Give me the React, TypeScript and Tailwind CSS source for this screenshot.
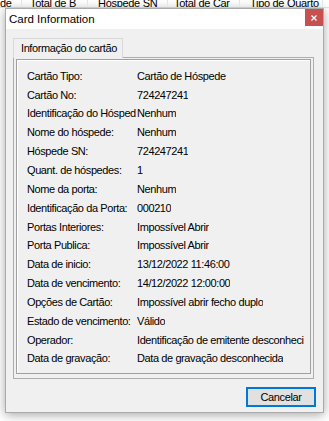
import React from 'react';

const rows: [string, string][] = [
  ['Cartão Tipo:', 'Cartão de Hóspede'],
  ['Cartão No:', '724247241'],
  ['Identificação do Hósped', 'Nenhum'],
  ['Nome do hóspede:', 'Nenhum'],
  ['Hóspede SN:', '724247241'],
  ['Quant. de hóspedes:', '1'],
  ['Nome da porta:', 'Nenhum'],
  ['Identificação da Porta:', '000210'],
  ['Portas Interiores:', 'Impossível Abrir'],
  ['Porta Publica:', 'Impossível Abrir'],
  ['Data de inicio:', '13/12/2022 11:46:00'],
  ['Data de vencimento:', '14/12/2022 12:00:00'],
  ['Opções de Cartão:', 'Impossível abrir fecho duplo'],
  ['Estado de vencimento:', 'Válido'],
  ['Operador:', 'Identificação de emitente desconheci'],
  ['Data de gravação:', 'Data de gravação desconhecida'],
];

// colunas da lista por trás do diálogo
const headerCols = [
  { w: 'w-[22px]', pl: 'pl-0', text: 'de' },
  { w: 'w-[66px]', pl: 'pl-[8px]', text: 'Total de B' },
  { w: 'w-[80px]', pl: 'pl-[10px]', text: 'Hóspede SN' },
  { w: 'w-[72px]', pl: 'pl-[6px]', text: 'Total de Car' },
  { w: 'w-[83px]', pl: 'pl-[10px]', text: 'Tipo de Quarto' },
];

const App = () => {
  return (
    <div className="w-[329px] h-[421px] overflow-hidden bg-white font-['Liberation_Sans',Arial,sans-serif] text-black">
      {/* Header strip of the list behind */}
      <div className="flex h-[8px] overflow-hidden border-b border-[#e5e5e5]">
        {headerCols.map((c, i) => (
          <div
            key={i}
            className={`${c.w} ${c.pl} shrink-0 flex items-end overflow-hidden whitespace-nowrap border-r border-[#e5e5e5] text-[11px] leading-[11px] tracking-[-0.3px]`}
          >
            <span className="-mb-[2px]">{c.text}</span>
          </div>
        ))}
      </div>

      {/* Dialog */}
      <div className="ml-[5px] w-[319px] h-[405px] flex flex-col bg-[#f0f0f0] border border-[#aaaaaa] shadow-[0_2px_10px_rgba(0,0,0,0.35)]">
        {/* Title bar */}
        <div className="h-[20px] shrink-0 flex items-start justify-between bg-white">
          <span className="pl-[3px] pt-[2px] text-[11.5px] leading-[16px]">Card Information</span>
          <div className="w-[18px] h-[17px] flex items-center justify-center bg-[#c75050]">
            <svg width="6" height="6" viewBox="0 0 6 6">
              <path d="M0.5 0.5 L5.5 5.5 M5.5 0.5 L0.5 5.5" stroke="white" strokeWidth="1.3" />
            </svg>
          </div>
        </div>

        {/* Body */}
        <div className="flex-1 flex flex-col px-[7px] pt-[9px] text-[11px] tracking-[-0.4px]">
          {/* Tab */}
          <div className="relative z-10 -mb-px w-[110px] h-[20px] flex items-center pl-[7px] bg-[#f0f0f0] border border-b-0 border-[#d9d9d9]">
            Informação do cartão
          </div>

          {/* Tab page */}
          <div className="w-[301px] h-[322px] pt-px px-[2px] pb-[4px] border border-[#adadad]">
            <div className="h-full flex flex-col pt-[6.6px] pl-[10px] border border-[#a0a0a0] shadow-[inset_1px_1px_0_#ffffff]">
              {rows.map(([label, value], i) => (
                <div key={i} className="h-[18.85px] flex items-center whitespace-nowrap">
                  <span className="w-[110px] shrink-0 overflow-hidden">{label}</span>
                  <span className="overflow-hidden">{value}</span>
                </div>
              ))}
            </div>
          </div>

          {/* Buttons */}
          <div className="flex justify-end pt-[8px]">
            <button className="w-[70px] h-[20px] flex items-center justify-center bg-[#e1e1e1] border-2 border-[#0078d7] text-[11px] tracking-[-0.4px]">
              Cancelar
            </button>
          </div>
        </div>
      </div>
    </div>
  );
};

export default App;
